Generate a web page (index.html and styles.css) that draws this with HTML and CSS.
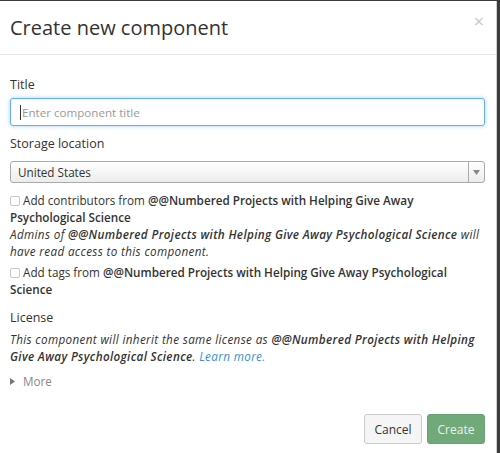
FILE: index.html
```html
<!DOCTYPE html>
<html>
<head>
<meta charset="utf-8">
<link rel="stylesheet" href="styles.css">
</head>
<body>
<div class="modal">
  <div class="modal-header">
    <h3 class="modal-title">Create new component</h3>
    <span class="close">&times;</span>
  </div>
  <div class="modal-body">
    <div class="label">Title</div>
    <div class="input focused"><span class="caret"></span><span class="placeholder">Enter component title</span></div>
    <div class="label storage">Storage location</div>
    <div class="select"><span class="select-text">United States</span><span class="select-arrow"><svg width="7" height="5" viewBox="0 0 7 5"><path d="M0 0 L7 0 L3.5 5 Z" fill="#888"/></svg></span></div>
    <div class="check-row">
      <span class="checkbox"></span>Add contributors from <b>@@Numbered Projects with Helping Give Away Psychological Science</b>
    </div>
    <div class="note"><i>Admins of <b>@@Numbered Projects with Helping Give Away Psychological Science</b> will have read access to this component.</i></div>
    <div class="check-row tags">
      <span class="checkbox"></span>Add tags from <b>@@Numbered Projects with Helping Give Away Psychological Science</b>
    </div>
    <div class="label license">License</div>
    <div class="note"><i>This component will inherit the same license as <b>@@Numbered Projects with Helping Give Away Psychological Science</b>. <a class="link">Learn more.</a></i></div>
    <div class="more"><svg width="5" height="7" viewBox="0 0 5 7"><path d="M0 0 L5 3.5 L0 7 Z" fill="#777"/></svg><span>More</span></div>
  </div>
  <div class="modal-footer">
    <button class="btn btn-default">Cancel</button>
    <button class="btn btn-success">Create</button>
  </div>
</div>
</body>
</html>
```
FILE: styles.css
```css
html, body {
  margin: 0;
  padding: 0;
  background: #3b3b3b;
  height: 453px;
  overflow: hidden;
}
body {
  font-family: "Open Sans", "Noto Sans", sans-serif;
  color: #333;
  font-size: 11.7px;
}
.modal {
  margin-top: 1px;
  width: 497px;
  height: 452px;
  background: #fff;
  box-sizing: border-box;
  border-right: 1px solid #d0d0d0;
}
.modal-header {
  display: flex;
  justify-content: space-between;
  align-items: flex-start;
  height: 53px;
  border-bottom: 1px solid #e5e5e5;
  padding: 0 12px 0 10px;
}
.modal-title {
  margin: 13px 0 0;
  font-size: 20px;
  font-weight: 400;
  line-height: 28px;
  color: #333;
}
.close {
  margin-top: 10px;
  font-size: 18px;
  color: #c8c8c8;
  line-height: 20px;
}
.modal-body {
  padding: 21px 11px 0 10px;
}
.label {
  font-size: 12.5px;
  line-height: 18px;
  color: #333;
}
.input {
  margin-top: 4px;
  height: 28px;
  box-sizing: border-box;
  border: 1px solid #66afe9;
  border-radius: 3px;
  box-shadow: 0 0 4px rgba(102, 175, 233, 0.6), inset 0 1px 1px rgba(0,0,0,0.05);
  display: flex;
  align-items: center;
  padding-left: 9px;
}
.caret {
  width: 1px;
  height: 15px;
  background: #333;
  margin-right: 1px;
}
.placeholder {
  color: #999;
  font-size: 11.6px;
}
.storage {
  margin-top: 9px;
}
.select {
  margin-top: 8px;
  height: 22px;
  box-sizing: border-box;
  border: 1px solid #aaa;
  border-radius: 3px;
  background: linear-gradient(#fff, #ececec);
  display: flex;
  align-items: center;
  justify-content: space-between;
}
.select-text {
  padding-left: 7px;
  font-size: 11.7px;
}
.select-arrow {
  width: 15px;
  height: 100%;
  border-left: 1px solid #aaa;
  display: flex;
  align-items: center;
  justify-content: center;
}
.check-row {
  margin-top: 9px;
  line-height: 17px;
}
.check-row b, .note b {
  font-weight: 600;
}
.checkbox {
  display: inline-block;
  width: 8px;
  height: 8px;
  border: 1px solid #c8c8c8;
  border-radius: 2px;
  margin-right: 3px;
  vertical-align: -1px;
}
.note {
  line-height: 17px;
  letter-spacing: 0.35px;
}
.tags {
  margin-top: 4px;
}
.license {
  margin-top: 11px;
}
.license + .note {
  margin-top: 4px;
}
.link {
  color: #3b8fd5;
}
.more {
  margin-top: 8px;
  display: flex;
  align-items: center;
  color: #888;
  line-height: 17px;
}
.more svg {
  margin-right: 8px;
}
.modal-footer {
  display: flex;
  justify-content: flex-end;
  gap: 5px;
  padding: 24px 11px 0 0;
}
.btn {
  font-family: "Open Sans", "Noto Sans", sans-serif;
  font-size: 12px;
  height: 30px;
  border-radius: 3px;
  padding: 0 9px;
  box-sizing: border-box;
}
.btn-default {
  background: #f5f5f5;
  border: 1px solid #ccc;
  color: #333;
  width: 58px;
}
.btn-success {
  background: #71a97a;
  border: 1px solid #6aa373;
  color: #eaf3eb;
  width: 58px;
}
```
